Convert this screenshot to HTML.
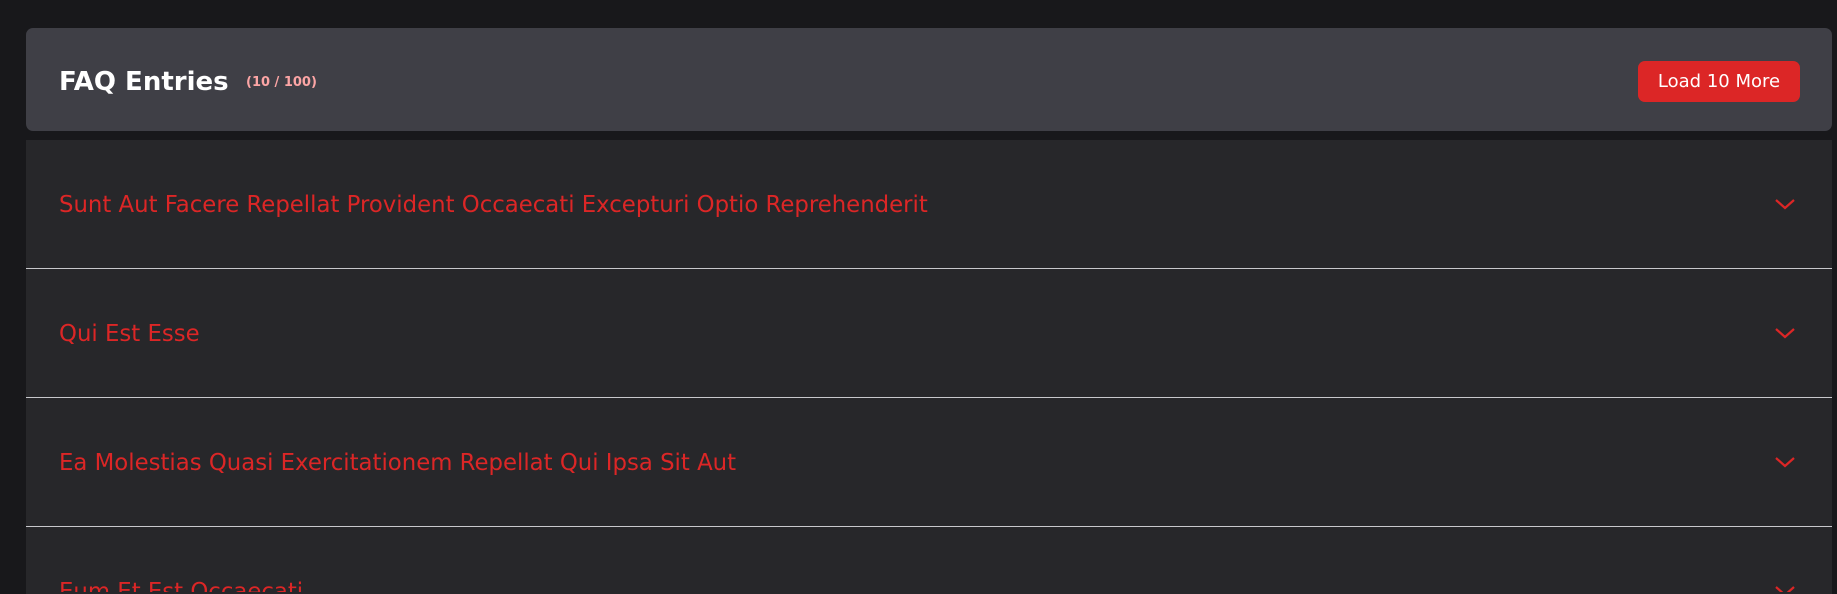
<!DOCTYPE html>
<html><head><meta charset="utf-8"><style>
*{margin:0;padding:0;box-sizing:border-box}
html,body{width:1837px;height:594px;overflow:hidden}
body{background:#18181b;font-family:"DejaVu Sans",sans-serif;position:relative}
.hdr{position:absolute;left:26px;top:28px;width:1806px;height:103px;background:#3f3f46;border-radius:7px}
.hdr h1{position:absolute;left:33px;top:37px;font-weight:bold;color:#fff;line-height:34px;font-size:26px}
.hdr .cnt{position:absolute;left:220px;top:47px;font-size:13px;font-weight:bold;color:#fca5a5}
.btn{position:absolute;left:1612px;top:33px;width:162px;height:41px;background:#dc2626;border-radius:7px;color:#fff;font-size:18px;line-height:41px;text-align:center}
.list{position:absolute;left:26px;top:140px;width:1806px;height:454px;background:#27272a;overflow:hidden}
.row{height:129px;border-bottom:1px solid #c8c8cc;position:relative;overflow:hidden}
.row span{position:absolute;left:33px;top:51px;font-size:22.8px;color:#dc2626;line-height:28px}
.row svg{position:absolute;left:1748px;top:57px}
</style></head><body>
<div class="hdr"><h1>FAQ Entries</h1><span class="cnt">(10 / 100)</span><div class="btn">Load 10 More</div></div>
<div class="list">
<div class="row"><span>Sunt Aut Facere Repellat Provident Occaecati Excepturi Optio Reprehenderit</span><svg width="22" height="14" viewBox="0 0 22 14"><path d="M2 3l9 8 9-8" fill="none" stroke="#dc2626" stroke-width="2.2"/></svg></div>
<div class="row"><span>Qui Est Esse</span><svg width="22" height="14" viewBox="0 0 22 14"><path d="M2 3l9 8 9-8" fill="none" stroke="#dc2626" stroke-width="2.2"/></svg></div>
<div class="row"><span>Ea Molestias Quasi Exercitationem Repellat Qui Ipsa Sit Aut</span><svg width="22" height="14" viewBox="0 0 22 14"><path d="M2 3l9 8 9-8" fill="none" stroke="#dc2626" stroke-width="2.2"/></svg></div>
<div class="row" style="border:none;height:65px"><span>Eum Et Est Occaecati</span><svg width="22" height="14" viewBox="0 0 22 14"><path d="M2 3l9 8 9-8" fill="none" stroke="#dc2626" stroke-width="2.2"/></svg></div>
</div>
</body></html>
